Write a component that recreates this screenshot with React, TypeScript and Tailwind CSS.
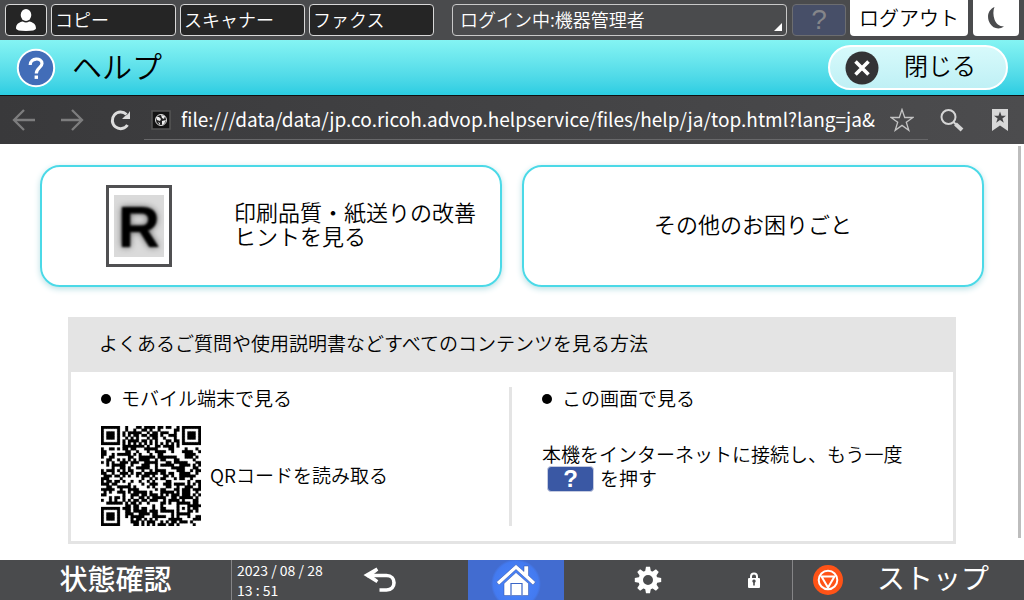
import { useState } from 'react'
import type { ReactNode } from 'react'

const QR_SIZE = 37

// finder squares in three corners, one alignment square, timing lines, the rest is data
function qrModule(x: number, y: number) {
  const finders = [[3, 3], [QR_SIZE - 4, 3], [3, QR_SIZE - 4]]
  for (const [cx, cy] of finders) {
    const d = Math.max(Math.abs(x - cx), Math.abs(y - cy))
    if (d <= 4) return d !== 2 && d !== 4
  }
  const a = Math.max(Math.abs(x - 30), Math.abs(y - 30))
  if (a <= 2) return a !== 1
  if (x === 6 || y === 6) return (x + y) % 2 === 0
  let h = (x * 374761393 + y * 668265263) | 0
  h = Math.imul(h ^ (h >>> 13), 1274126177)
  return ((h ^ (h >>> 16)) & 255) < 140
}

function QrCode() {
  let d = ''
  for (let y = 0; y < QR_SIZE; y++) {
    for (let x = 0; x < QR_SIZE; x++) {
      if (qrModule(x, y)) d += `M${x} ${y}h1v1h-1z`
    }
  }
  return (
    <svg viewBox="0 0 37 37" className="size-[100px] shrink-0" role="img" aria-label="QRコード">
      <path d={d} fill="#000" stroke="#000" strokeWidth="0.100" />
    </svg>
  )
}

function UserIcon() {
  return (
    <svg viewBox="0 0 20 22" className="h-[22px] w-5" fill="#fff">
      <ellipse cx="10" cy="6" rx="5.3" ry="6" />
      <path d="M0 19.5C0 15 3 13.3 6.8 12.5Q10 14.6 13.2 12.5C17 13.3 20 15 20 19.5Q19.5 22 10 22T0 19.5Z" />
    </svg>
  )
}

function MoonIcon() {
  return (
    <svg viewBox="0 0 18 22" className="h-[22px] w-[18px]" fill="#4a4b4d">
      <path d="M7.500 0C0.500 3 -0.500 11 3 16.500C6 21.500 12 23 17 19.500C12 19.500 9 16.500 7.500 12.500C6 8.500 6 3.500 7.500 0Z" />
    </svg>
  )
}

function HelpIcon() {
  return (
    <svg viewBox="0 0 40 40" className="size-10 shrink-0" fill="none">
      <circle cx="20" cy="20" r="18.2" fill="#426db8" stroke="#fff" strokeWidth="2" />
      <path d="M14.200 17C14.200 9.300 26 9.300 26 15.500C26 19.500 20.300 20 20.300 25.500" stroke="#fff" strokeWidth="3.200" />
      <path d="M18.600 27.500h3.400v3.400h-3.400z" fill="#fff" />
    </svg>
  )
}

function CloseIcon() {
  return (
    <svg viewBox="0 0 34 34" className="size-[34px]">
      <circle cx="17" cy="17" r="16.500" fill="#333335" />
      <path d="M10.500 10.500l13 13M23.500 10.500l-13 13" stroke="#fff" strokeWidth="3.600" />
    </svg>
  )
}

function ArrowIcon({ flip }: { flip?: boolean }) {
  return (
    <svg viewBox="0 0 24 24" className={flip ? 'size-6 -scale-x-100' : 'size-6'} fill="none" stroke="#7d7d7e" strokeWidth="2.300">
      <path d="M23 12H2M12 2L2 12L12 22" />
    </svg>
  )
}

function ReloadIcon() {
  return (
    <svg viewBox="0 0 22 22" className="size-[22px]" fill="none">
      <path d="M17.500 16A8.300 8.300 0 1 1 16.500 5.500" stroke="#ddd" strokeWidth="3" />
      <path d="M20 2V10H12L14.500 7.500L18 5Z" fill="#ddd" />
    </svg>
  )
}

function GlobeIcon() {
  return (
    <svg viewBox="0 0 20 20" className="size-5 shrink-0">
      <path d="M1 1h18v18H1z" fill="#141414" stroke="#555" strokeWidth="1.500" />
      <circle cx="10" cy="10" r="5.500" fill="#222" stroke="#ddd" />
      <path d="M5 7l3 0l2 2l-1 2l-3-1zM10 5l4 1l-1 3l-2-1zM11 11l4-1l-2 4l-2 1zM7 12l2 1v2z" fill="#eee" />
    </svg>
  )
}

function StarIcon() {
  return (
    <svg viewBox="0 0 24 24" className="size-6" fill="none" stroke="#c4c4c4" strokeWidth="1.300">
      <path d="M12 1.500L14.700 9.500H23L16.300 14.300L18.800 22.300L12 17.400L5.200 22.300L7.700 14.300L1 9.500H9.300Z" />
    </svg>
  )
}

function SearchIcon() {
  return (
    <svg viewBox="0 0 24 24" className="size-6" fill="none" stroke="#d5d5d5">
      <circle cx="8.500" cy="9" r="7" strokeWidth="2" />
      <path d="M13.500 14l3 3" strokeWidth="2" />
      <path d="M15.500 16l6.500 6" strokeWidth="4" />
    </svg>
  )
}

function BookmarkIcon() {
  return (
    <svg viewBox="0 0 16 22" className="h-[22px] w-4">
      <path d="M0 0h16v22l-8-5.500L0 22Z" fill="#d8d8d8" />
      <path d="M8 2.500l1.500 4.200h4.500l-3.600 2.700l1.400 4.300L8 11.100l-3.800 2.600l1.400-4.300L2 6.700h4.500Z" fill="#464648" />
    </svg>
  )
}

function BackIcon() {
  return (
    <svg viewBox="0 0 34 26" className="h-[26px] w-[34px]" fill="none" stroke="#fff">
      <path d="M4 8.500H23.500C33.500 8.500 33.500 23 23.500 23H16.500" strokeWidth="3.600" />
      <path d="M13.500 0.500L0.500 8L13.500 16L15.300 13.200L9 8.500L15.300 3.500Z" fill="#fff" stroke="none" />
    </svg>
  )
}

function HomeIcon() {
  return (
    <svg viewBox="0 0 96 40" className="h-10 w-24">
      <defs>
        <radialGradient id="glow">
          <stop offset="0" stopColor="#4a86ff" />
          <stop offset="0.9" stopColor="#437af0" />
          <stop offset="1" stopColor="#426cd0" />
        </radialGradient>
      </defs>
      <circle cx="48" cy="24" r="25" fill="url(#glow)" />
      <g stroke="#2c4da0" strokeWidth="0.5" fill="#fff">
        <path d="M36 23.500L48 12.500L60.500 23.500V35.500H36Z" />
        <path d="M48 4.500L56 11.500V6H60.500V15.500L67.500 22L65 25L48 9.500L31 25L28.500 22Z" />
      </g>
      <path d="M43 35V23.500H54V35" fill="none" stroke="#3a66c8" strokeWidth="1.200" />
    </svg>
  )
}

function GearIcon() {
  const teeth = [0, 45, 90, 135, 180, 225, 270, 315]
  return (
    <svg viewBox="0 0 28 28" className="size-7" fill="#fff">
      {teeth.map((deg) => (
        <path key={deg} d="M11 6L12 0.800H16L17 6Z" transform={`rotate(${deg} 14 14)`} />
      ))}
      <circle cx="14" cy="14" r="7.300" fill="none" stroke="#fff" strokeWidth="4.600" />
    </svg>
  )
}

function LockIcon() {
  return (
    <svg viewBox="0 0 12 16" className="h-4 w-3">
      <path d="M3 7V4.500a3 3 0 0 1 6 0V7" fill="none" stroke="#fff" strokeWidth="2" />
      <rect y="6" width="12" height="10" rx="1" fill="#fff" />
      <path d="M6 7.500a1.700 1.700 0 0 1 .8 3.200V13.500H5.200V10.700A1.700 1.700 0 0 1 6 7.500Z" fill="#4a4b4d" />
    </svg>
  )
}

function StopIcon() {
  return (
    <svg viewBox="0 0 32 32" className="size-8" fill="none" stroke="#fff">
      <circle cx="16" cy="16" r="15" fill="#ff5317" stroke="none" />
      <circle cx="16" cy="16" r="9.300" strokeWidth="2" />
      <path d="M9.500 12.500H22.500L16 23.500Z" strokeWidth="2" />
    </svg>
  )
}

function AppButton({ children }: { children: ReactNode }) {
  return (
    <button className="h-8 w-[125px] rounded-sm border border-[#d8d8d8] bg-[#252525] px-[3px] pb-0.5 text-left text-lg leading-7 text-white">
      {children}
    </button>
  )
}

function Bullet({ children }: { children: ReactNode }) {
  return (
    <h3 className="flex items-center gap-[10px] text-[19px] leading-6">
      <span className="size-[10px] rounded-full bg-black" />
      <span className="pb-0.5 leading-[22px]">{children}</span>
    </h3>
  )
}

export default function HelpScreen() {
  const [url, setUrl] = useState('file:///data/data/jp.co.ricoh.advop.helpservice/files/help/ja/top.html?lang=ja&')

  return (
    <div className="flex min-h-screen flex-col bg-white font-['Noto_Sans_CJK_JP',sans-serif] font-[350] whitespace-nowrap text-black">
      <div className="flex h-10 items-center bg-[#4a4b4d] px-[5px]">
        <div className="flex gap-1">
          <button aria-label="ユーザー" className="flex h-8 w-[42px] items-center justify-center rounded-sm border border-[#d8d8d8] bg-[#252525]">
            <UserIcon />
          </button>
          <AppButton>コピー</AppButton>
          <AppButton>スキャナー</AppButton>
          <AppButton>ファクス</AppButton>
        </div>
        <button className="ml-[18px] flex h-8 flex-1 items-center justify-between rounded-sm border border-[#c8c8c8] pr-1 pl-[7px] text-lg text-white">
          <span className="pb-0.5 leading-7">ログイン中:機器管理者</span>
          <svg viewBox="0 0 8 8" className="mb-1 size-2 self-end" fill="#fff">
            <path d="M8 0V8H0Z" />
          </svg>
        </button>
        <button className="ml-[5px] h-8 w-[54px] rounded-sm border border-[#6c6d70] bg-[#474f68] font-['Liberation_Sans',sans-serif] text-[28px] leading-7 text-[#85868a]">
          ?
        </button>
        <button className="ml-1 h-9 w-[118px] self-start rounded-b-sm bg-white text-xl leading-9">ログアウト</button>
        <button aria-label="スリープ" className="ml-[5px] flex h-9 w-[46px] items-center justify-center self-start rounded-b-sm bg-white">
          <MoonIcon />
        </button>
      </div>

      <header className="flex h-[55px] items-center bg-linear-to-b from-[#84f4f3] to-[#2acde2] pr-4 pl-4">
        <HelpIcon />
        <h1 className="ml-4 flex-1 pb-[6px] text-[30px] leading-[48px]">ヘルプ</h1>
        <button className="flex h-[45px] w-[180px] items-center rounded-full border-2 border-white bg-linear-to-b from-[#d7fafb] to-[#bff0f5] pl-[15px] text-2xl">
          <CloseIcon />
          <span className="ml-[25px] pb-[5px] leading-9">閉じる</span>
        </button>
      </header>

      <div className="flex h-[49px] items-center border-t border-[#111] bg-linear-to-r from-[#39393b] to-[#4c4c4e] pr-4 pl-3">
        <button aria-label="戻る"><ArrowIcon /></button>
        <button aria-label="進む" className="ml-6"><ArrowIcon flip /></button>
        <button aria-label="再読み込み" className="ml-[26px]"><ReloadIcon /></button>
        <div className="mb-1 ml-3 flex h-10 min-w-0 flex-1 items-center self-end border-b border-[#68686a] pl-[7px]">
          <GlobeIcon />
          <input
            aria-label="URL"
            value={url}
            onChange={(e) => setUrl(e.target.value)}
            className="ml-[10px] h-9 min-w-0 flex-1 bg-transparent pb-0.5 text-[19px] font-normal text-white outline-none"
          />
          <button aria-label="お気に入り" className="mr-[14px] ml-[11px]"><StarIcon /></button>
        </div>
        <button aria-label="検索" className="ml-3"><SearchIcon /></button>
        <button aria-label="ブックマーク" className="ml-[28px]"><BookmarkIcon /></button>
      </div>

      <main className="relative flex-1 px-10 pt-[21px] pb-4">
        <div className="absolute top-0.5 right-[3px] bottom-[22px] w-[3px] bg-[#bdbdbd]" />

        <div className="grid grid-cols-2 gap-5 text-[22px] leading-6">
          <button className="flex h-[122px] items-center rounded-[20px] border-2 border-[#4bd9e7] pl-16 text-left shadow-[0_2px_6px_#b9dfe4]">
            <span className="flex h-[82px] w-[66px] items-center justify-center border-3 border-[#505052]">
              <svg viewBox="0 0 50 62" className="h-[62px] w-[50px] overflow-visible bg-[#dadada] font-['Liberation_Sans',sans-serif]">
                <text x="4" y="52" fontSize="58" fontWeight="bold" className="drop-shadow-[0_0_3px_#555] blur-[1px]">R</text>
              </svg>
            </span>
            <span className="ml-[62px] pb-[6px]">
              印刷品質・紙送りの改善
              <br />
              ヒントを見る
            </span>
          </button>
          <button className="h-[122px] rounded-[20px] border-2 border-[#4bd9e7] pb-[6px] shadow-[0_2px_6px_#b9dfe4]">
            その他のお困りごと
          </button>
        </div>

        <section className="mx-7 mt-[30px] border-3 border-t-0 border-[#e4e4e4] text-[19px] leading-6">
          <h2 className="bg-[#e4e4e4] px-7 pt-[14px] pb-[17px]">よくあるご質問や使用説明書などすべてのコンテンツを見る方法</h2>
          <div className="grid grid-cols-2 py-[15px]">
            <div className="border-r-3 border-[#e4e4e4] pl-[30px]">
              <Bullet>モバイル端末で見る</Bullet>
              <div className="mt-[15px] flex items-center gap-[9px]">
                <QrCode />
                <p className="pb-0.5">QRコードを読み取る</p>
              </div>
            </div>
            <div className="pl-[30px]">
              <Bullet>この画面で見る</Bullet>
              <p className="mt-[31px]">本機をインターネットに接続し、もう一度</p>
              <p className="flex items-start gap-[6px] pl-[5px]">
                <span className="h-[26px] w-[47px] rounded-sm border border-[#c5cbe0] bg-[#3a58a4] text-center font-['Liberation_Sans',sans-serif] text-2xl leading-6 font-bold text-white">?</span>
                を押す
              </p>
            </div>
          </div>
        </section>
      </main>

      <footer className="flex h-10 items-center bg-[#4a4b4d] text-white">
        <button className="h-10 w-[231px] pb-1 text-[28px] leading-9 font-medium">状態確認</button>
        <time className="h-10 w-[106px] border-l border-[#858587] pl-[5px] text-sm leading-5 font-normal">
          2023 / 08 / 28
          <br />
          13 : 51
        </time>
        <button aria-label="戻る" className="ml-[26px]"><BackIcon /></button>
        <div className="flex flex-1 items-center justify-between pl-[71px]">
          <button aria-label="ホーム" className="bg-[#426cd0]"><HomeIcon /></button>
          <button aria-label="設定" className="mr-4"><GearIcon /></button>
          <span className="mr-8"><LockIcon /></span>
        </div>
        <button className="flex h-10 w-[232px] items-center border-l border-[#858587] pl-[19px] text-[28px] font-normal">
          <StopIcon />
          <span className="ml-[33px] pb-[6px] leading-[34px]">ストップ</span>
        </button>
      </footer>
    </div>
  )
}
